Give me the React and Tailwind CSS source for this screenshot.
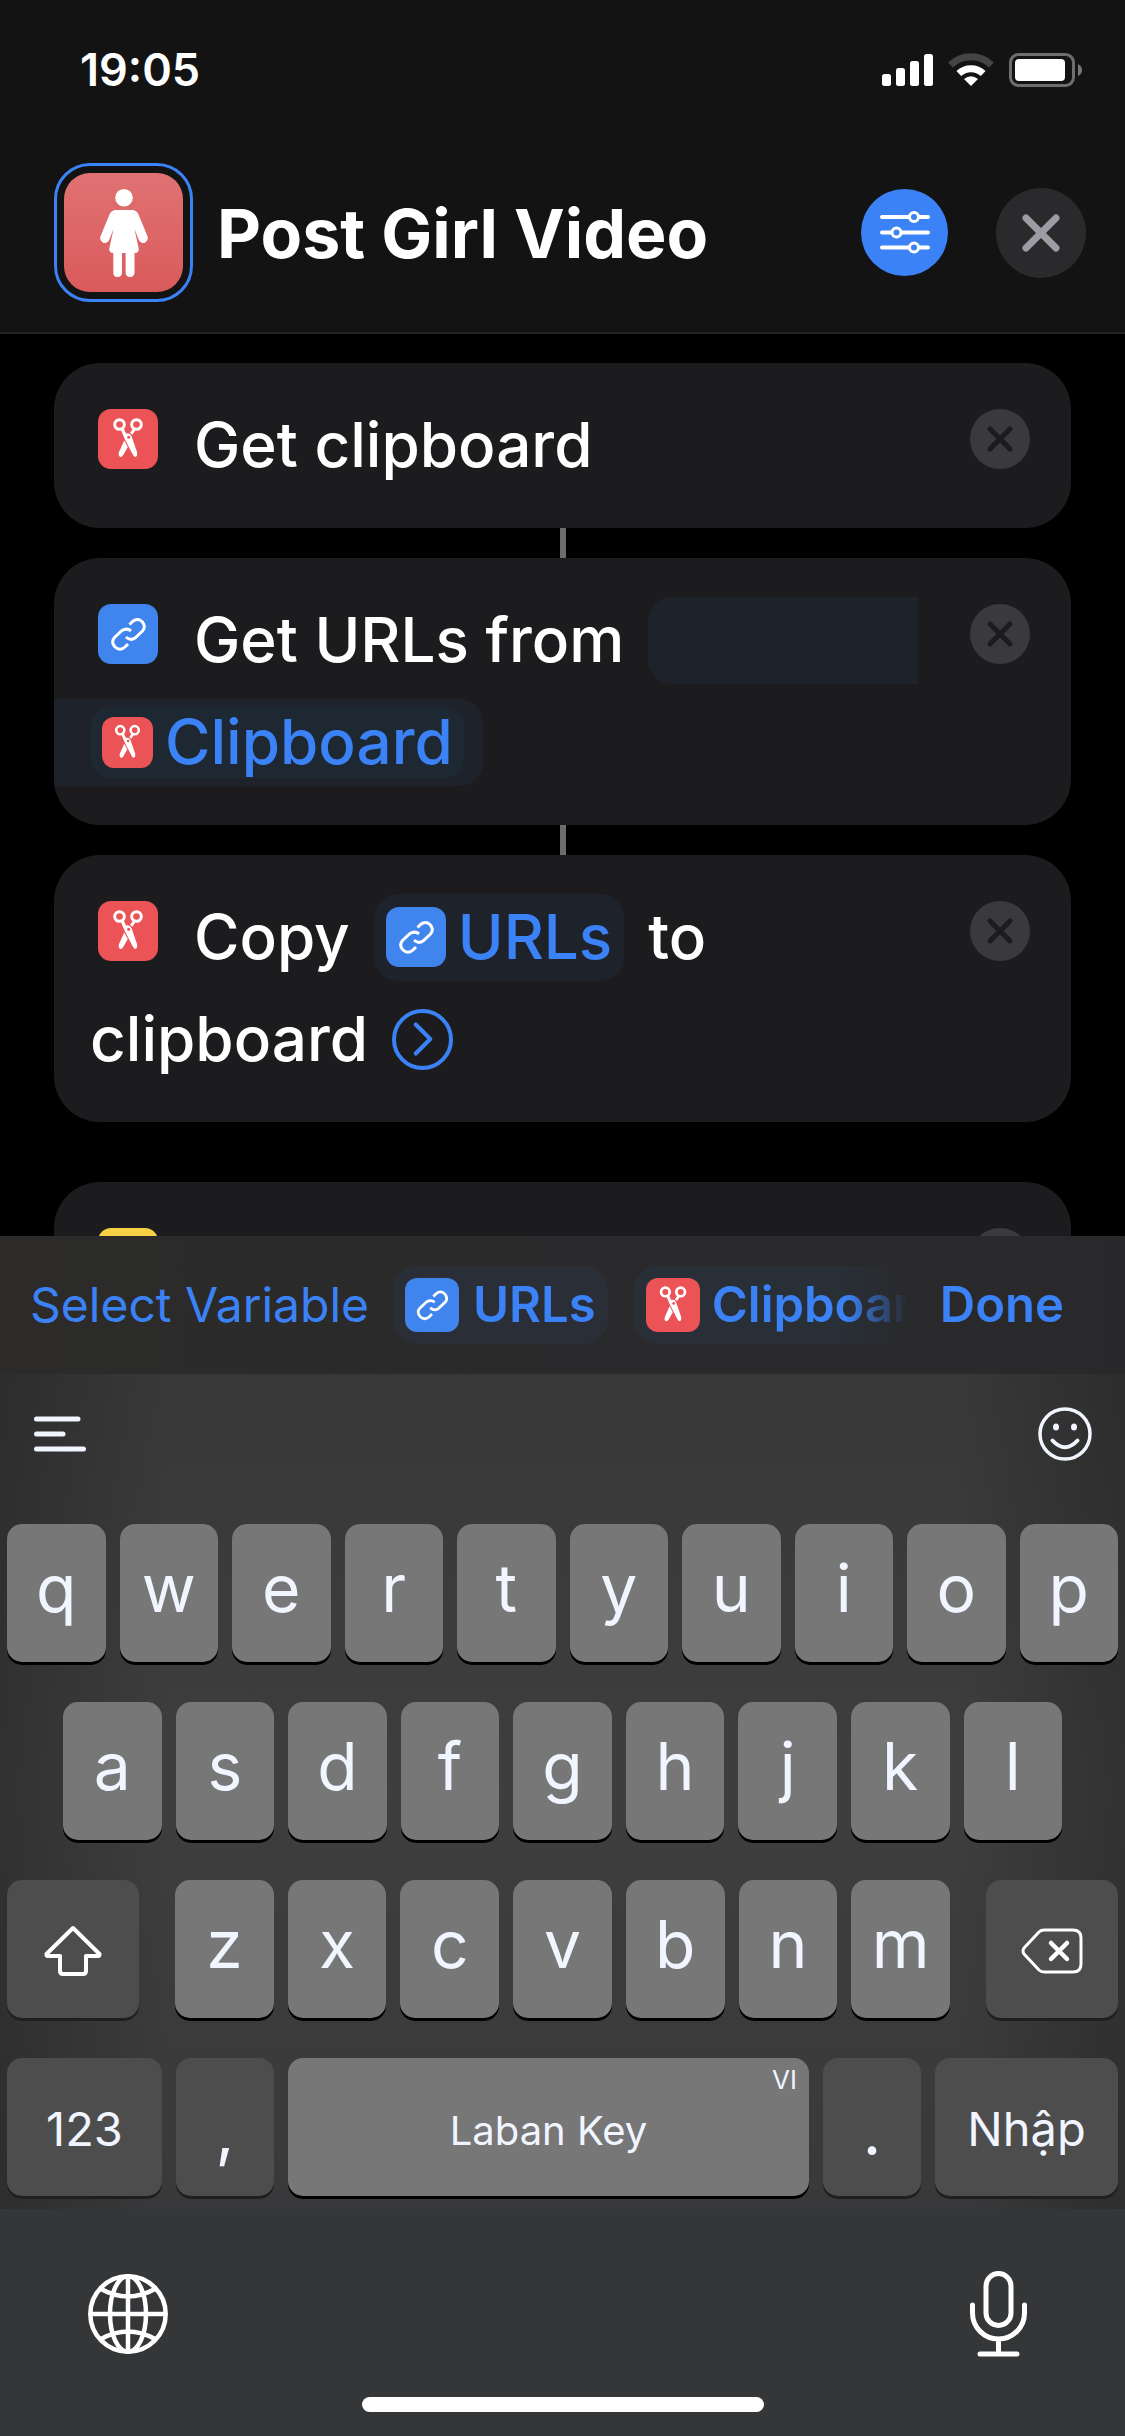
import { ChevronRight, X } from "lucide-react"

const CARD_TEXT = "text-[62px] leading-[102px] font-medium"

function StatusBar() {
  return (
    <div className="flex items-center justify-between pl-20 pr-[43px] pt-[42px]">
      <span className="text-[45px] leading-[56px] font-semibold">19:05</span>

      <div className="flex items-center gap-[15px]">
        <svg width="51" height="32" viewBox="0 0 51 32" fill="#fff">
          <rect x="0" y="20" width="9" height="12" rx="2.5" />
          <rect x="14" y="14" width="9" height="18" rx="2.5" />
          <rect x="28" y="7" width="9" height="25" rx="2.5" />
          <rect x="42" y="0" width="9" height="32" rx="2.5" />
        </svg>
        <svg width="46" height="34" viewBox="0 0 46 34" fill="none">
          <path d="M2.5 12 A29.5 29.5 0 0 1 43.5 12" stroke="#444" strokeWidth="7" />
          <path d="M10.8 20.500 A18 18 0 0 1 35.2 20.500" stroke="#fff" strokeWidth="7" />
          <path d="M23 33 L16 26 Q23 20.500 30 26 Z" fill="#fff" />
        </svg>
        <svg width="73" height="34" viewBox="0 0 73 34" fill="none">
          <rect x="1.500" y="1.500" width="63" height="31" rx="8" stroke="#6e6e6e" strokeWidth="3" />
          <rect x="6" y="6" width="50" height="22" rx="4" fill="#fff" />
          <path d="M69 11 Q73 13 73 17 Q73 21 69 23 Z" fill="#777" />
        </svg>
      </div>
    </div>
  )
}

function Header() {
  return (
    <header className="shrink-0 bg-[#131313] border-b-2 border-[#232323] pb-[30px]">
      <StatusBar />

      <div className="flex items-center pl-[54px] pr-[39px] mt-[65px]">
        <div className="size-[139px] shrink-0 rounded-[36px] border-[3px] border-[#3b82f6] p-[7px]">
          <div className="size-full rounded-[26px] bg-gradient-to-b from-[#e07273] to-[#da5a5b] flex justify-center items-center">
            <svg width="48" height="88" viewBox="0 0 48 88" fill="#fff">
              <circle cx="24" cy="8.800" r="8.800" />
              <path d="M16 21 H32 Q36.500 21 38.500 25.500 L47.400 47 Q48.800 51 45.600 53.200 Q41.600 55.500 39 51.600 L34.500 40 L38.800 60 Q39 64 35 64 H34.500 V84 Q34 88 30 88 Q26 88 25.600 84 V64 H22 V84 Q21.600 88 17.500 88 Q13.500 88 13.300 84 V64 Q9 64 9.200 60 L13.500 40 L9 51.600 Q6.400 55.500 2.400 53.200 Q-0.800 51 0.600 47 L9.500 25.500 Q11.500 21 16 21 Z" />
            </svg>
          </div>
        </div>

        <h1 className="flex-1 ml-6 text-[68px] leading-[84px] font-bold">Post Girl Video</h1>

        <button aria-label="Settings" className="size-[87px] rounded-full bg-[#3b82f6] flex items-center justify-center">
          <svg width="50" height="43" viewBox="0 0 50 43" fill="#3b82f6" stroke="#fff" strokeWidth="4" strokeLinecap="round">
            <path d="M2 6 H48 M2 21.500 H48 M2 36.500 H48" />
            <circle cx="34" cy="6" r="4.500" strokeWidth="3" />
            <circle cx="16.500" cy="21.500" r="4.500" strokeWidth="3" />
            <circle cx="34" cy="36.500" r="4.500" strokeWidth="3" />
          </svg>
        </button>
        <button aria-label="Close" className="size-[90px] ml-12 rounded-full bg-[#2a2a2c] text-[#9d9ba3] flex items-center justify-center">
          <svg width="38" height="38" viewBox="0 0 38 38" stroke="currentColor" strokeWidth="7" strokeLinecap="round">
            <path d="M4 4 L34 34 M34 4 L4 34" />
          </svg>
        </button>
      </div>
    </header>
  )
}

function ScissorsIcon() {
  return (
    <svg viewBox="0 0 60 60" className="size-full" fill="none" stroke="#fff" strokeWidth="3">
      <circle cx="21.500" cy="15.500" r="4.800" />
      <circle cx="38.500" cy="15.500" r="4.800" />
      <path d="M22.500 20 L26 20 L28 24.500 Q31.500 23.500 33.500 27 L39 43 Q39.800 47.500 37.200 48 Q35.500 47.500 34.500 45 L26.500 29.500 Z" fill="#fff" stroke="none" />
      <path d="M36.500 20 L33.200 24.800" />
      <path d="M26.200 31.500 L29.800 38 L25.500 45.500 Q24 48.500 22 48 Q20 46.500 20.800 43.500 Z" fill="#fff" stroke="none" />
      <circle cx="30.700" cy="28.300" r="1.500" fill="#eb5357" stroke="none" />
    </svg>
  )
}

function LinkIcon() {
  return (
    <svg viewBox="0 0 60 60" className="size-full" fill="none" stroke="#fff" strokeWidth="3">
      <path d="M31.500 20.500 L34.500 17.500 Q39.500 13.500 44 17.500 Q48.500 22.500 44.500 27 L37 34 Q32.500 37.200 28 33" />
      <path d="M30 40 L27 43 Q22 47.500 17 43 Q12.500 38 16.500 33.500 L24 26.500 Q29 23.500 33 27" />
    </svg>
  )
}

function ActionIcon({ type, className = "size-[60px] rounded-[13px]" }) {
  return (
    <span
      className={`inline-block shrink-0 overflow-hidden ${className} ${
        type === "link" ? "bg-[#4085ee]" : type === "note" ? "bg-[#f7d046]" : "bg-[#eb5357]"
      }`}
    >
      {type === "link" && <LinkIcon />}
      {type === "scissors" && <ScissorsIcon />}
    </span>
  )
}

function ActionCard({ icon, firstLine, secondLine, connected }) {
  return (
    <>
      <article className={`bg-[#1c1c1e] rounded-[46px] overflow-hidden pt-[31px] pb-8 text-white ${CARD_TEXT}`}>
        <div className="flex items-center h-[102px] pl-11 pr-[41px]">
          <div className="flex pb-3">
            <ActionIcon type={icon} />
          </div>
          <div className="flex flex-1 items-center ml-9 whitespace-nowrap">{firstLine}</div>
          <button aria-label="Remove action" className="size-[60px] mb-3 shrink-0 rounded-full bg-[#3a3a3c] text-[#1c1c1e] flex items-center justify-center">
            <X size={40} strokeWidth={3} />
          </button>
        </div>
        {secondLine && <div className="flex items-center h-[102px]">{secondLine}</div>}
      </article>
      {connected && <div className="w-[6px] h-[30px] mx-auto bg-[#6c6c70]"></div>}
    </>
  )
}

function Workflow() {
  return (
    <main className="flex-1 min-h-0 overflow-hidden px-[54px] pt-[29px]">
      <ActionCard icon="scissors" firstLine="Get clipboard" connected />

      <ActionCard
        icon="link"
        connected
        firstLine={
          <>
            Get URLs from
            <span className="h-[87px] flex-1 ml-6 mr-[52px] rounded-l-3xl bg-[#1e222a]"></span>
          </>
        }
        secondLine={
          <div className="flex items-center h-[87px] rounded-r-3xl bg-[#1e222a] pl-[37px] pr-[19px]">
            <span className="flex items-center h-[71px] gap-3 px-[11px] rounded-[18px] bg-[#1e2832] text-[#3b82f6]">
              <ActionIcon type="scissors" className="size-[51px] rounded-xl" />
              Clipboard
            </span>
          </div>
        }
      />

      <ActionCard
        icon="scissors"
        firstLine={
          <>
            Copy
            <span className="flex items-center h-[87px] gap-3 px-3 mx-6 rounded-3xl bg-[#1e222a] text-[#3b82f6]">
              <ActionIcon type="link" />
              URLs
            </span>
            to
          </>
        }
        secondLine={
          <>
            <span className="ml-9">clipboard</span>
            <button aria-label="Show more" className="size-[61px] ml-6 rounded-full border-4 border-[#3b82f6] text-[#3b82f6] flex items-center justify-center">
              <ChevronRight size={58} strokeWidth={1.7} className="shrink-0" />
            </button>
          </>
        }
      />

      <div className="mt-[60px]">
        <ActionCard icon="note" />
      </div>
    </main>
  )
}

function VariableBar() {
  return (
    <div className="shrink-0 flex items-center h-[138px] pl-[30px] pr-[61px] bg-gradient-to-r from-[#2c2b29] via-[#2a2a2c] to-[#29292b] text-[#3b82f6] leading-[60px] whitespace-nowrap">
      <button className="text-[48px]">Select Variable</button>
      <div className="flex flex-1 min-w-0 overflow-hidden gap-[26px] ml-6 mr-8 mask-r-from-88% mask-r-to-100% text-[49px] font-semibold">
        <button className="flex items-center shrink-0 h-[78px] gap-[14px] px-3 rounded-3xl bg-[#2a2e36]">
          <ActionIcon type="link" className="size-[54px] rounded-xl" />
          URLs
        </button>
        <button className="flex items-center shrink-0 h-[78px] gap-3 px-3 rounded-3xl bg-[#292f36]">
          <ActionIcon type="scissors" className="size-[54px] rounded-xl" />
          Clipboard
        </button>
      </div>
      <button className="text-[49px] font-semibold">Done</button>
    </div>
  )
}

function Key({ children, label, dark, className = "flex-1 text-[66px] pb-[10px]" }) {
  return (
    <button
      aria-label={label}
      className={`relative flex items-center justify-center h-[138px] min-w-0 rounded-[15px] ${
        dark ? "bg-[#4d4d4e] shadow-[0_3px_0_#1f1f1f]" : "bg-[#777777] shadow-[0_3px_0_#000]"
      } ${className}`}
    >
      {children}
    </button>
  )
}

function LetterKeys({ letters }) {
  return letters.split("").map((letter) => <Key key={letter}>{letter}</Key>)
}

function Keyboard() {
  return (
    <section className="shrink-0 bg-[#353637] text-[#f0f5ff]">
      <div className="bg-gradient-to-b from-[#383838] via-[#3e3e3e] to-[#39393b]">
        <div className="bg-[linear-gradient(to_right,#00000033,#00000000_15%,#00000000_85%,#00000033)] pb-[13px]">
          <div className="flex items-center justify-between h-[150px] pl-[34px] pr-[33px] pb-[30px]">
            <button aria-label="Menu">
              <svg width="52" height="36" viewBox="0 0 52 36" stroke="#f0f5ff" strokeWidth="5" strokeLinecap="round">
                <path d="M2.500 3 H44 M2.500 18 H29 M2.500 33 H49.500" />
              </svg>
            </button>
            <button aria-label="Emoji">
              <svg width="54" height="54" viewBox="0 0 54 54" fill="none" stroke="#f0f5ff">
                <circle cx="27" cy="27" r="25" strokeWidth="3.500" />
                <ellipse cx="18" cy="20" rx="3" ry="3.500" fill="#f0f5ff" stroke="none" />
                <ellipse cx="36" cy="20" rx="3" ry="3.500" fill="#f0f5ff" stroke="none" />
                <path d="M14.500 33.500 Q27 47 39.500 33.500" strokeWidth="4" strokeLinecap="round" />
              </svg>
            </button>
          </div>

          <div className="flex flex-col gap-10">
            <div className="flex gap-[14px] px-[7px]">
              <LetterKeys letters="qwertyuiop" />
            </div>
            <div className="flex gap-[14px] px-[63px]">
              <LetterKeys letters="asdfghjkl" />
            </div>
            <div className="flex gap-9 px-[7px]">
              <Key dark label="Shift" className="w-[132px] pt-1">
                <svg width="58" height="52" viewBox="0 0 58 52" fill="none" stroke="#fff" strokeWidth="4" strokeLinejoin="round">
                  <path d="M29 3 L55.500 29 Q56 31 54 31 H42 V46 Q42 49 39 49 H19 Q16 49 16 46 V31 H4 Q2 31 2.500 29 Z" />
                </svg>
              </Key>
              <div className="flex flex-1 gap-[14px]">
                <LetterKeys letters="zxcvbnm" />
              </div>
              <Key dark label="Delete" className="w-[132px] pt-1">
                <svg width="62" height="46" viewBox="0 0 62 46" fill="none" stroke="#fff" strokeWidth="3" strokeLinecap="round" strokeLinejoin="round">
                  <path d="M23 2 H52 Q60 2 60 10 V36 Q60 44 52 44 H23 Q20 44 18 42 L3 26 Q1 23 3 20 L18 4 Q20 2 23 2 Z" />
                  <path d="M30 15 L46 31 M46 15 L30 31" strokeWidth="4.500" />
                </svg>
              </Key>
            </div>
            <div className="flex gap-[14px] px-[7px]">
              <Key dark className="w-[155px] text-[47px] pt-1">123</Key>
              <Key dark className="w-[98px] text-[66px] pt-2">,</Key>
              <Key className="flex-1 text-[40px] pt-2">
                Laban Key
                <span className="absolute right-3 top-1 text-[26px] leading-9">VI</span>
              </Key>
              <Key dark className="w-[98px] text-[66px] pt-2">.</Key>
              <Key dark className="w-[183px] text-[47px] pt-1">Nhập</Key>
            </div>
          </div>
        </div>
      </div>

      <div className="flex items-center justify-between pl-[88px] pr-[98px] pt-[62px]">
        <button aria-label="Next keyboard">
          <svg width="80" height="80" viewBox="0 0 80 80" fill="none" stroke="#fff" strokeWidth="4.500">
            <circle cx="40" cy="40" r="37.700" />
            <ellipse cx="40" cy="40" rx="18" ry="37.700" />
            <path d="M40 2 V78 M2 40 H78 M13 15 Q40 30 67 15 M13 65 Q40 50 67 65" />
          </svg>
        </button>
        <button aria-label="Dictate">
          <svg width="57" height="86" viewBox="0 0 57 86" fill="none" stroke="#fff" strokeWidth="5" strokeLinecap="round">
            <rect x="16" y="2.500" width="25" height="52" rx="12.500" />
            <path d="M2.500 34 V42 A26 26 0 0 0 54.500 42 V34 M28.500 68 V82 M10 83 H47" />
          </svg>
        </button>
      </div>

      <div className="pt-10 pb-6">
        <div className="w-[402px] h-[15px] mx-auto rounded-full bg-white"></div>
      </div>
    </section>
  )
}

function App() {
  return (
    <div className="flex flex-col h-screen bg-black text-white font-['Inter',sans-serif]">
      <Header />
      <Workflow />
      <VariableBar />
      <Keyboard />
    </div>
  )
}

export default App
